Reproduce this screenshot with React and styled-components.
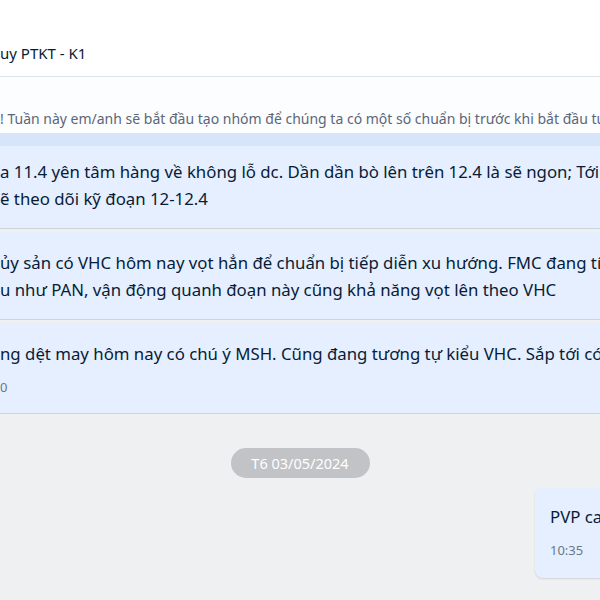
import styled, { createGlobalStyle } from 'styled-components';

const GlobalStyle = createGlobalStyle`
  html, body {
    margin: 0;
    padding: 0;
    background: #eef0f1;
  }
  body {
    font-family: "Noto Sans", "Open Sans", sans-serif;
    color: #081c36;
  }
`;

const messages = [
  {
    id: 1,
    lines: [
      'a 11.4 yên tâm hàng về không lỗ dc. Dần dần bò lên trên 12.4 là sẽ ngon; Tới 12.4',
      'ẽ theo dõi kỹ đoạn 12-12.4',
    ],
  },
  {
    id: 2,
    lines: [
      'ủy sản có VHC hôm nay vọt hẳn để chuẩn bị tiếp diễn xu hướng. FMC đang tích lũy',
      'u như PAN, vận động quanh đoạn này cũng khả năng vọt lên theo VHC',
    ],
  },
  {
    id: 3,
    lines: ['ng dệt may hôm nay có chú ý MSH. Cũng đang tương tự kiểu VHC. Sắp tới có'],
    time: '0',
  },
];

function App() {
  return (
    <>
      <GlobalStyle />
      <Screen>
        <Header>
          <Title>uy PTKT - K1</Title>
        </Header>
        <Pinned>! Tuần này em/anh sẽ bắt đầu tạo nhóm để chúng ta có một số chuẩn bị trước khi bắt đầu tuần mới</Pinned>
        <PinnedEdge />
        <Thread>
          {messages.map((m, idx) => (
            <Bubble key={m.id} $first={idx === 0}>
              {m.lines.map((line, i) => (
                <Line key={i}>{line}</Line>
              ))}
              {m.time && <Time>{m.time}</Time>}
            </Bubble>
          ))}
        </Thread>
        <DateRow>
          <DatePill>T6 03/05/2024</DatePill>
        </DateRow>
        <MineRow>
          <MineBubble>
            <Line>PVP ca</Line>
            <Time>10:35</Time>
          </MineBubble>
        </MineRow>
      </Screen>
    </>
  );
}

const Screen = styled.div`
  width: 600px;
  height: 600px;
  overflow: hidden;
  display: flex;
  flex-direction: column;
  background: #eef0f1;
`;

const Header = styled.div`
  flex: none;
  height: 77px;
  background: #ffffff;
  border-bottom: 1px solid #dfe2e7;
  display: flex;
  align-items: center;
  padding-top: 30px;
  box-sizing: border-box;
`;

const Title = styled.div`
  font-size: 15px;
  color: #081c36;
  white-space: nowrap;
`;

const Pinned = styled.div`
  flex: none;
  height: 56px;
  background: #fcfdfe;
  display: flex;
  align-items: center;
  padding-top: 26px;
  box-sizing: border-box;
  font-size: 14px;
  color: #5b6678;
  white-space: nowrap;
  overflow: hidden;
`;

const PinnedEdge = styled.div`
  flex: none;
  height: 13px;
  background: #d7e5fa;
`;

const Thread = styled.div`
  display: flex;
  flex-direction: column;
  gap: 4px;
`;

const Bubble = styled.div`
  background: #e5efff;
  padding: ${(p) => (p.$first ? '12px' : '17px')} 0 16px;
  box-shadow: 0 1px 0 #cfd4db;
  overflow: hidden;
`;

const Line = styled.div`
  font-size: 16.8px;
  line-height: 27px;
  white-space: nowrap;
`;

const Time = styled.div`
  font-size: 13px;
  line-height: 20px;
  margin-top: 10px;
  color: #6b778a;
`;

const DateRow = styled.div`
  display: flex;
  justify-content: center;
  padding-top: 35px;
`;

const DatePill = styled.div`
  width: 139px;
  height: 30px;
  border-radius: 15px;
  background: #c1c3c6;
  color: #ffffff;
  font-size: 14.5px;
  display: flex;
  align-items: center;
  justify-content: center;
`;

const MineRow = styled.div`
  display: flex;
  padding-top: 10px;
  padding-left: 535px;
`;

const MineBubble = styled.div`
  flex: none;
  width: 200px;
  height: 90px;
  box-sizing: border-box;
  background: #e5efff;
  border-radius: 8px;
  box-shadow: 0 1px 2px rgba(0, 0, 0, 0.12);
  padding: 15px 15px;
`;

export default App;
